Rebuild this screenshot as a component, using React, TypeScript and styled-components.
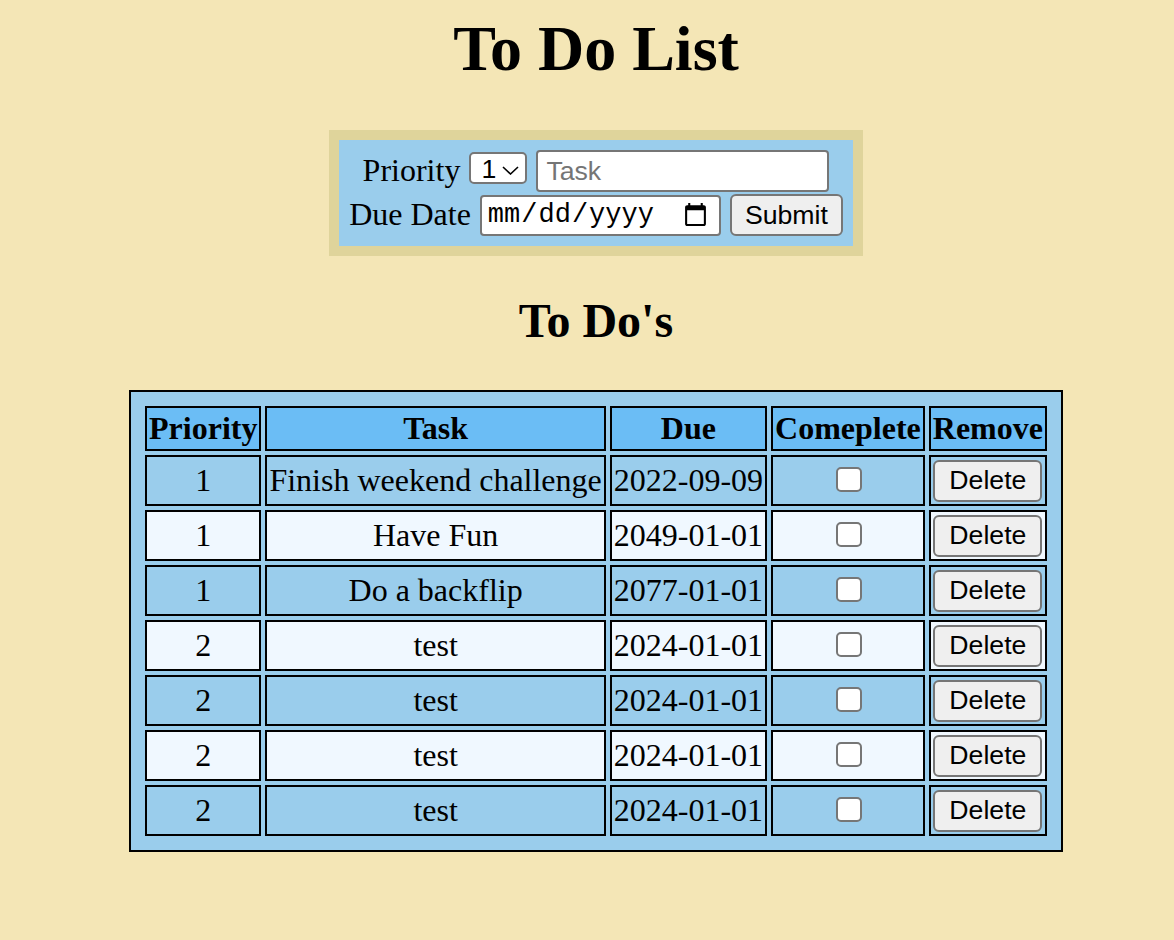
import React from "react";
import styled, { createGlobalStyle } from "styled-components";

const GlobalStyle = createGlobalStyle`
  html, body {
    margin: 0;
    padding: 0;
    background: #f4e6b6;
  }
  body {
    font-family: "Liberation Serif", "Times New Roman", serif;
    font-size: 32px;
    color: #000;
  }
`;

const Page = styled.main`
  display: flex;
  flex-direction: column;
  align-items: center;
  box-sizing: border-box;
  min-height: 940px;
  padding: 12px 0 60px 18px;
`;

const Title = styled.h1`
  margin: 0;
  font-size: 64px;
  line-height: 74px;
  font-weight: bold;
`;

const Form = styled.form`
  margin-top: 44px;
  display: flex;
  flex-direction: column;
  align-items: center;
  gap: 2px;
  padding: 10px 10px;
  background: #9acdec;
  border: 10px solid #dfd49b;
`;

const Row = styled.div`
  display: flex;
  align-items: center;
  gap: 9px;
  height: 42px;
`;

const Label = styled.label`
  font-size: 32px;
  line-height: 40px;
  margin-bottom: 2px;
`;

const controlFont = `
  font-family: "Liberation Sans", Arial, sans-serif;
  font-size: 26.67px;
  color: #000;
  box-sizing: border-box;
  border: 2px solid #767676;
  margin: 0;
`;

const SelectWrap = styled.span`
  position: relative;
  display: inline-flex;
  margin-bottom: 6px;
`;

const Select = styled.select`
  ${controlFont}
  appearance: none;
  width: 58px;
  height: 32px;
  padding: 0 0 0 10px;
  border-radius: 5px;
  background: #fff;
`;

const Chevron = styled.svg`
  position: absolute;
  right: 8px;
  top: 14px;
  width: 17px;
  height: 9px;
  pointer-events: none;
`;

const TextInput = styled.input`
  ${controlFont}
  width: 293px;
  height: 42px;
  padding: 0 8px;
  border-radius: 4px;
  background: #fff;
  &::placeholder {
    color: #757575;
  }
`;

const DateInput = styled.input`
  ${controlFont}
  font-family: "Liberation Mono", "Courier New", monospace;
  font-size: 27px;
  width: 241px;
  height: 41px;
  padding: 0 8px 0 5px;
  border-radius: 4px;
  background: #fff;
`;

const Button = styled.button<{ $w: number; $h: number }>`
  ${controlFont}
  width: ${(p) => p.$w}px;
  height: ${(p) => p.$h}px;
  padding: 0;
  border-radius: 6px;
  background: #efefef;
  cursor: pointer;
`;

const Subtitle = styled.h2`
  margin: 37px 0 42px;
  font-size: 48px;
  line-height: 55px;
  font-weight: bold;
`;

const Table = styled.table`
  border: 2px solid #000;
  padding: 10px;
  border-collapse: separate;
  border-spacing: 4px;
  background: #9acdec;
`;

const HeadRow = styled.tr`
  height: 45px;
`;

const BodyRow = styled.tr`
  height: 51px;
`;

const Th = styled.th`
  border: 2px solid #000;
  padding: 2px;
  background: #6bbdf5;
  font-size: 32px;
  font-weight: bold;
  text-align: center;
`;

const Td = styled.td<{ $light: boolean }>`
  border: 2px solid #000;
  padding: 2px;
  background: ${(p) => (p.$light ? "#f0f8ff" : "#9acdec")};
  font-size: 32px;
  text-align: center;
  vertical-align: middle;
  white-space: nowrap;
`;

const Check = styled.input`
  appearance: none;
  display: block;
  box-sizing: border-box;
  width: 26px;
  height: 25px;
  margin: 0 auto;
  border: 2px solid #767676;
  border-radius: 5px;
  background: #fff;
  translate: 1px -1px;
`;

const todos = [
  { priority: 1, task: "Finish weekend challenge", due: "2022-09-09" },
  { priority: 1, task: "Have Fun", due: "2049-01-01" },
  { priority: 1, task: "Do a backflip", due: "2077-01-01" },
  { priority: 2, task: "test", due: "2024-01-01" },
  { priority: 2, task: "test", due: "2024-01-01" },
  { priority: 2, task: "test", due: "2024-01-01" },
  { priority: 2, task: "test", due: "2024-01-01" },
];

export default function App() {
  return (
    <>
      <GlobalStyle />
      <Page>
        <Title>To Do List</Title>
        <Form onSubmit={(e) => e.preventDefault()}>
          <Row>
            <Label htmlFor="priority">Priority</Label>
            <SelectWrap>
              <Select id="priority" defaultValue="1">
                <option value="1">1</option>
                <option value="2">2</option>
                <option value="3">3</option>
              </Select>
              <Chevron viewBox="0 0 17 9" fill="none">
                <path d="M1 1 L8.5 8 L16 1" stroke="#000" strokeWidth="1.6" />
              </Chevron>
            </SelectWrap>
            <TextInput type="text" placeholder="Task" />
          </Row>
          <Row>
            <Label htmlFor="due">Due Date</Label>
            <DateInput id="due" type="date" />
            <Button type="submit" $w={113} $h={42}>
              Submit
            </Button>
          </Row>
        </Form>
        <Subtitle>To Do's</Subtitle>
        <Table>
          <thead>
            <HeadRow>
              <Th>Priority</Th>
              <Th>Task</Th>
              <Th>Due</Th>
              <Th>Comeplete</Th>
              <Th>Remove</Th>
            </HeadRow>
          </thead>
          <tbody>
            {todos.map((t, i) => {
              const light = i % 2 === 1;
              return (
                <BodyRow key={i}>
                  <Td $light={light}>{t.priority}</Td>
                  <Td $light={light}>{t.task}</Td>
                  <Td $light={light}>{t.due}</Td>
                  <Td $light={light}>
                    <Check type="checkbox" />
                  </Td>
                  <Td $light={light}>
                    <Button type="button" $w={109} $h={42}>
                      Delete
                    </Button>
                  </Td>
                </BodyRow>
              );
            })}
          </tbody>
        </Table>
      </Page>
    </>
  );
}
